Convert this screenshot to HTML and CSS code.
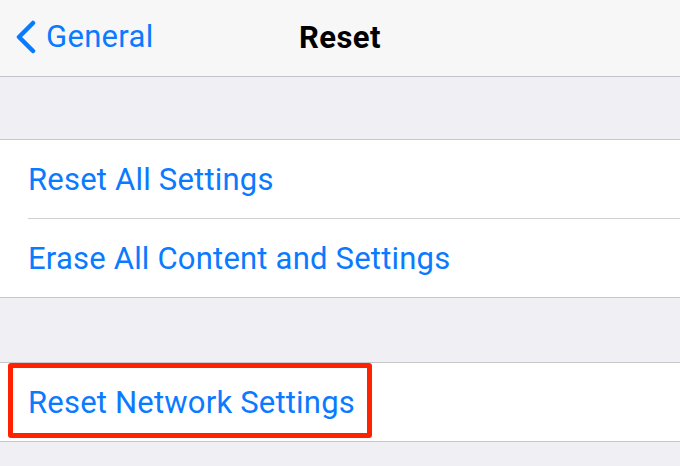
FILE: index.html
```html
<!DOCTYPE html>
<html lang="en">
<head>
    <meta charset="UTF-8">
    <meta name="viewport" content="width=device-width, initial-scale=1.0">
    <title>Reset</title>
    <link rel="stylesheet" href="styles.css">
</head>
<body>
    <div id="screen">

        <div class="navbar">
            <div class="back">
                <svg class="chevron" width="24" height="34" viewBox="0 0 24 34">
                    <path d="M20 3 L6 17 L20 31" fill="none" stroke="#0a7aff" stroke-width="4.5" stroke-linecap="round" stroke-linejoin="round"/>
                </svg>
                <span>General</span>
            </div>
            <div class="title">Reset</div>
        </div>

        <div class="spacer"></div>

        <div class="group">
            <div class="row">Reset All Settings</div>
            <div class="row">Erase All Content and Settings</div>
        </div>

        <div class="spacer short"></div>

        <div class="group">
            <div class="row highlighted">
                Reset Network Settings
                <div class="marker"></div>
            </div>
        </div>

    </div>
</body>
</html>
```

FILE: styles.css
```css
body {
    margin: 0;
    padding: 0;
    background-color: #efeff4;
    font-family: Roboto, "Liberation Sans", sans-serif;
}

#screen {
    width: 680px;
    height: 466px;
    overflow: hidden;
    display: flex;
    flex-direction: column;
}

.navbar {
    height: 76px;
    flex: none;
    background-color: #f7f7f8;
    border-bottom: 1px solid #c4c4c8;
    display: flex;
    align-items: center;
    position: relative;
}

.back {
    display: flex;
    align-items: center;
    margin-left: 13px;
    color: #0a7aff;
    font-size: 31px;
    margin-top: -3px;
}

.back span {
    margin-left: 9px;
    letter-spacing: 0.3px;
}

.title {
    position: absolute;
    left: 0;
    right: 0;
    top: 19px;
    text-align: center;
    font-size: 31px;
    font-weight: 700;
    letter-spacing: 0.4px;
    color: #000;
    pointer-events: none;
}

.spacer {
    height: 62px;
    flex: none;
}

.spacer.short {
    height: 64px;
}

.group {
    background-color: #ffffff;
    border-top: 1px solid #c8c7cc;
    border-bottom: 1px solid #c8c7cc;
    padding-left: 28px;
}

.row {
    height: 78px;
    display: flex;
    align-items: center;
    color: #0a7aff;
    font-size: 31px;
    letter-spacing: 0.2px;
    position: relative;
}

.row + .row {
    border-top: 1px solid #d0d0d4;
}

.marker {
    position: absolute;
    left: -20px;
    top: 0;
    width: 354px;
    height: 65px;
    border: 5px solid #ff2200;
    border-radius: 3px;
}
```
